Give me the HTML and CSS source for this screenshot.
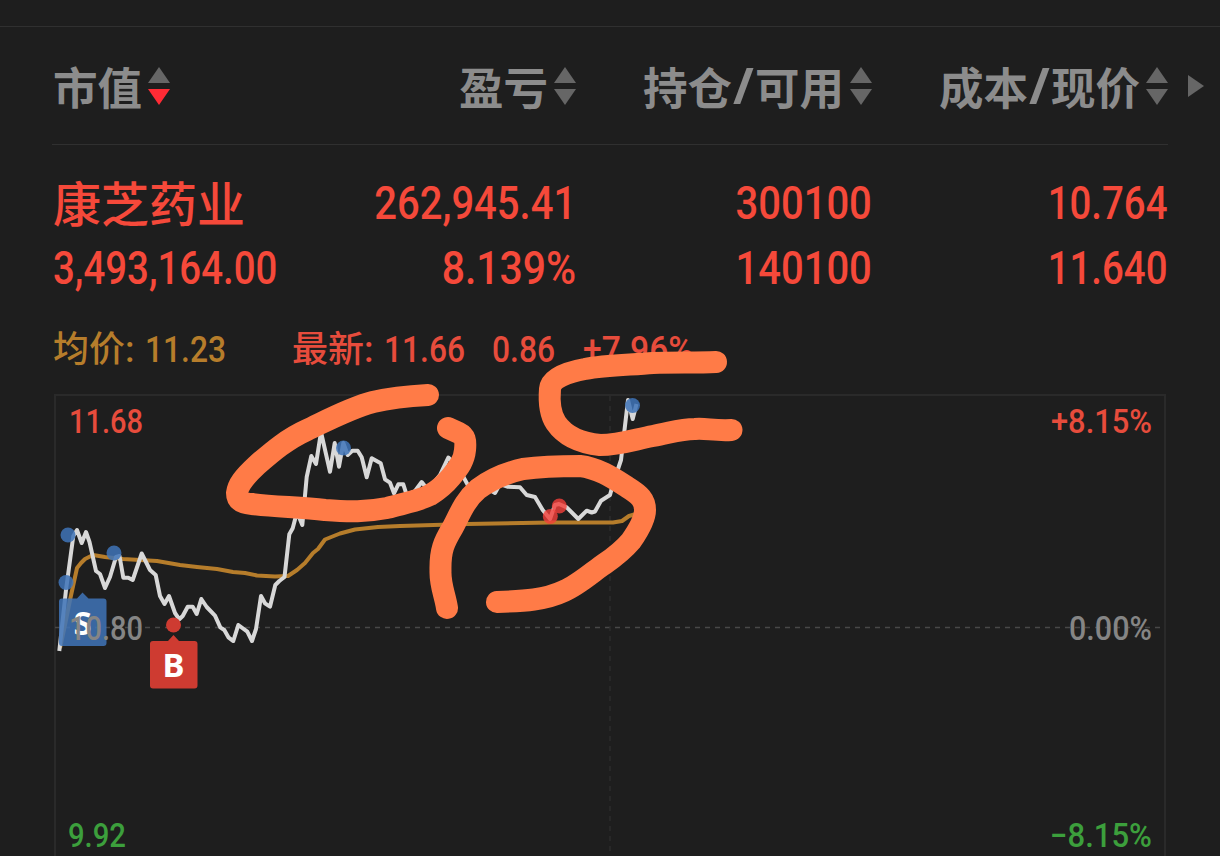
FILE: index.html
```
<!DOCTYPE html>
<html lang="zh-CN">
<head>
    <meta charset="UTF-8">
    <meta name="viewport" content="width=device-width, initial-scale=1.0">
    <title>持仓</title>
    <link rel="stylesheet" href="styles.css">
</head>
<body>
    <div class="page">
        <div class="top-bar"></div>

        <div class="grid header">
            <div class="cell">市值<svg class="sort" viewBox="0 0 22 38"><path class="up" d="M11 0L22 16H0z"/><path class="down active" d="M0 22H22L11 38z"/></svg></div>
            <div class="cell">盈亏<svg class="sort" viewBox="0 0 22 38"><path class="up" d="M11 0L22 16H0z"/><path class="down" d="M0 22H22L11 38z"/></svg></div>
            <div class="cell">持仓<span class="slash">/</span>可用<svg class="sort" viewBox="0 0 22 38"><path class="up" d="M11 0L22 16H0z"/><path class="down" d="M0 22H22L11 38z"/></svg></div>
            <div class="cell">成本<span class="slash">/</span>现价<svg class="sort" viewBox="0 0 22 38"><path class="up" d="M11 0L22 16H0z"/><path class="down" d="M0 22H22L11 38z"/></svg></div>
            <svg class="more" viewBox="0 0 16 22"><path d="M0 0L16 11L0 22z"/></svg>
        </div>

        <div class="grid position">
            <div class="cell name">康芝药业</div>
            <div class="cell"><span class="num">262,945.41</span></div>
            <div class="cell"><span class="num">300100</span></div>
            <div class="cell"><span class="num narrow">10.764</span></div>
            <div class="cell"><span class="num narrow">3,493,164.00</span></div>
            <div class="cell"><span class="num wide">8.139%</span></div>
            <div class="cell"><span class="num">140100</span></div>
            <div class="cell"><span class="num narrow">11.640</span></div>
        </div>

        <!-- quote line and intraday chart, user units are page pixels -->
        <svg class="chart" viewBox="0 312 1220 544">
            <g class="quote">
                <text class="avg" x="53" y="362">均价:</text>
                <text class="avg" x="145" y="362" textLength="81" lengthAdjust="spacingAndGlyphs">11.23</text>
                <text class="rise" x="292" y="362">最新:</text>
                <text class="rise" x="384" y="362" textLength="81" lengthAdjust="spacingAndGlyphs">11.66</text>
                <text class="rise" x="492" y="362" textLength="63" lengthAdjust="spacingAndGlyphs">0.86</text>
                <text class="rise" x="583" y="362" textLength="110" lengthAdjust="spacingAndGlyphs">+7.96%</text>
            </g>

            <path class="frame" d="M55 856V395H1165V856"/>
            <path class="mid" d="M55 627.5H1160"/>
            <path class="noon" d="M610 396V856"/>

            <polyline class="avg-line" points="60,648 65,625 70,600 77,568 81,563 85,559 93,555 105,557 123,559 157,561 180,565 197,567 217,569 233,572 245,573 257,575.5 275,576.5 288,576 297,570 305,563 313,553 318,549 325,539.5 340,533.5 355,529.5 378,527 400,526 467,524 550,522.5 613,522.5 622,521 629,516 636,514"/>
            <polyline class="price-line" points="59.3,651 66,590 73.3,536 77,530 81.7,543 86,532 89.5,542 96,571 100,574 105,588 110,577 116,557 119.5,556 123.3,577.7 128.3,577.7 132.7,580 141.7,553.5 150,570 155.7,575 160,596 164.5,604 169,596 175,613 179.3,619.3 182.7,616 187.7,606.7 192.7,606.7 196.7,614 201.3,599 206.7,607 215,615.7 220.3,627.3 224.3,630 228.7,637.7 233.3,641 238.3,625 247.3,631.7 252,641 256,629 261,596 265,603.3 270,606.7 275.3,585 279.3,581 284.5,577 289.3,534.3 292.7,528.3 297,512 302.3,525 306.7,477 311.3,456 316,464 321,432 330,471.7 334.7,443 339,466.7 343.3,443 347.7,455 352.3,450.7 357.7,450.7 361.7,457.3 366.7,477.3 371.7,458.3 380.7,463.3 385,479.3 390,482.7 394,493.3 398.3,484.3 403.3,484.3 406.7,495 415,491 421.7,482 428,490 440,475 448.3,457.5 455,464 463.3,476.7 470,489 485,487 495,493 500,484 507.3,486.7 520,487.3 526.7,495 535,497 542.7,510 550,519 555,505 559,504 566.7,507.3 578.3,519 586.7,510.7 591.7,512.5 595,511.5 601,500.7 610,495 613,484 621,460 628,400 632.7,419 636.5,404"/>

            <g class="sell">
                <circle cx="68" cy="535" r="7.5"/>
                <circle cx="66" cy="582.5" r="7.5"/>
                <circle cx="114" cy="553" r="7.5"/>
                <circle cx="343.5" cy="448" r="7.5"/>
                <circle cx="632.5" cy="405.5" r="7.5"/>
                <path d="M62 598.5H77L82.5 592.5L88.5 598.5H103.5Q106.5 598.5 106.5 601.5V643Q106.5 646 103.5 646H62Q59 646 59 643V601.5Q59 598.5 62 598.5z"/>
            </g>
            <text class="tag" x="82.5" y="635">S</text>

            <g class="buy">
                <circle cx="550.3" cy="516.5" r="7.5"/>
                <circle cx="559.3" cy="506" r="7.5"/>
            </g>
            <g class="buy solid">
                <circle cx="173.5" cy="625" r="7.5"/>
                <path d="M153 641H168L173.5 635L179 641H194.5Q197.5 641 197.5 644V685.5Q197.5 688.5 194.5 688.5H153Q150 688.5 150 685.5V644Q150 641 153 641z"/>
            </g>
            <text class="tag" x="173.5" y="677">B</text>

            <g class="axis">
                <text class="rise" x="69" y="433" textLength="74" lengthAdjust="spacingAndGlyphs">11.68</text>
                <text class="flat" x="69" y="640" textLength="74" lengthAdjust="spacingAndGlyphs">10.80</text>
                <text class="fall" x="68" y="847" textLength="58" lengthAdjust="spacingAndGlyphs">9.92</text>
                <text class="rise" x="1051" y="433" textLength="101" lengthAdjust="spacingAndGlyphs">+8.15%</text>
                <text class="flat" x="1069" y="640" textLength="83" lengthAdjust="spacingAndGlyphs">0.00%</text>
                <text class="fall" x="1050" y="847" textLength="102" lengthAdjust="spacingAndGlyphs">−8.15%</text>
            </g>

            <!-- marker pen -->
            <g class="pen">
                <path d="M428 395C410 396 390 398 373 402C350 408 328 420 307 430C287 439 272 452 257 465C243 478 238 485 237 493C237 500 241 503 252 504C275 507 300 507 325 510C350 512 366 512 387 508C405 503 418 501 430 495C440 489 446 483 451 477C460 466 464 460 465 450C466 440 465 436 459 433L448 428"/>
                <path d="M716 362C695 363 675 362 653 363C630 365 605 365 585 369C568 372 551 378 550 389C549 401 550 414 556 423C565 436 580 443 600 445C620 445 636 439 653 436C670 433 680 429 695 429C706 428 714 431 731.5 430"/>
                <path d="M447 608C445 595 440 585 440.5 571C440 550 444 542 453 527C460 514 464 501 478 489C490 480 505 473 523 469C545 466 562 466 580 466C598 468 613 478 627 487C640 495 645 500 645 510C645 519 638 531 631 541C620 554 610 560 600 567C588 576 576 586 564 591C545 600 525 601 497 602"/>
            </g>
        </svg>
    </div>
</body>
</html>
```
FILE: styles.css
```
body {
    margin: 0;
    background-color: #1e1e1e;
    font-family: Roboto, "Noto Sans CJK SC", sans-serif;
}

.page {
    width: 1220px;
    height: 856px;
    overflow: hidden;
}

.top-bar {
    height: 26px;
    border-bottom: 1px solid #303030;
}

.grid {
    display: grid;
    grid-template-columns: 227px 296px 296px 296px;
    margin-left: 53px;
}

.cell {
    display: flex;
    align-items: center;
    justify-content: flex-end;
    white-space: nowrap;
}

.cell:nth-child(4n+1) {
    justify-content: flex-start;
}

/* column titles */
.header {
    grid-template-columns: 228px 296px 296px 296px 36px;
    width: 1168px;
    height: 118px;
    margin-left: 52px;
    color: #8c8c8c;
    font-family: "Noto Sans CJK SC", sans-serif;
    font-size: 44.5px;
    font-weight: 700;
    line-height: 117px;
    background: linear-gradient(#303030, #303030) 0 100% / 1116px 1px no-repeat;
}

.header .cell {
    height: 117px;
}

.header .cell:first-child {
    padding-left: 1px;
}

.slash {
    width: 23px;
    display: flex;
    justify-content: center;
    font-family: "Noto Sans", sans-serif;
    font-size: 50px;
}

.sort {
    width: 22px;
    height: 38px;
    margin-left: 6px;
    fill: #666;
}

.sort .active {
    fill: #ff2b35;
}

.more {
    align-self: center;
    justify-self: end;
    width: 16px;
    height: 22px;
    fill: #666;
}

/* position rows */
.position {
    grid-template-rows: 65px 65px;
    height: 142px;
    padding-top: 25px;
    color: #f5493a;
    font-size: 46px;
    font-weight: 500;
}

.name {
    font-family: "Noto Sans CJK SC", sans-serif;
    font-size: 48px;
    line-height: 63px;
    padding-bottom: 2px;
}

.num {
    transform: scaleX(0.87);
    transform-origin: right center;
}

.num.narrow {
    transform: scaleX(0.835);
}

.num.wide {
    transform: scaleX(0.89);
}

.cell:nth-child(4n+1) .num {
    transform-origin: left center;
}

/* chart */
.chart {
    display: block;
    width: 1220px;
    height: 544px;
}

.quote {
    font-size: 36px;
    font-weight: 500;
}

.axis {
    font-size: 33px;
    font-weight: 500;
}

.rise {
    fill: #e74c3c;
}

.fall {
    fill: #3c9f3c;
}

.flat {
    fill: #858585;
}

.avg {
    fill: #b67d2b;
}

.frame {
    fill: none;
    stroke: #2a2a2a;
    stroke-width: 2;
}

.mid {
    stroke: #484848;
    stroke-width: 1.5;
    stroke-dasharray: 5 5;
}

.noon {
    stroke: #2d2d2d;
    stroke-width: 1.5;
    stroke-dasharray: 5 5;
}

.price-line,
.avg-line {
    fill: none;
    stroke: #d8d8d8;
    stroke-width: 4;
    stroke-linejoin: round;
}

.avg-line {
    stroke: #b67d2b;
}

.sell {
    fill: #3f74b8;
    fill-opacity: 0.85;
}

.buy {
    fill: #f43f3a;
    fill-opacity: 0.8;
}

.solid {
    fill: #ce3b31;
    fill-opacity: 1;
}

.tag {
    fill: #fff;
    font-family: "Noto Sans", sans-serif;
    font-size: 33px;
    font-weight: 700;
    text-anchor: middle;
}

.pen {
    fill: none;
    stroke: #ff7b47;
    stroke-width: 22;
    stroke-linecap: round;
    stroke-linejoin: round;
}
```
